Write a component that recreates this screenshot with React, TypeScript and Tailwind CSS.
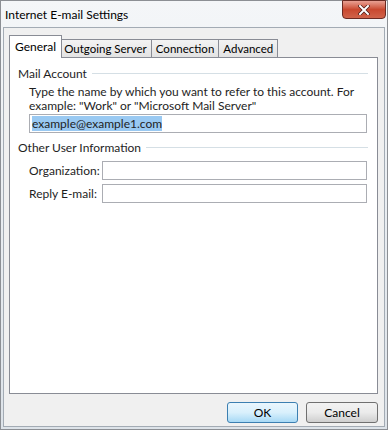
import React from 'react';

const font = { fontFamily: 'Lato, "Noto Sans", Arial, sans-serif' };

function Tab({ label, active }: { label: string; active?: boolean }) {
  if (active) {
    return (
      <div className="relative z-10 -mr-[2px] h-[23px] border border-b-0 border-[#898c95] bg-white px-[5px] pt-[3px] text-[12px] leading-[15px] text-black">
        {label}
      </div>
    );
  }
  return (
    <div className="-ml-[1px] mt-[3px] h-[19px] border border-b-0 border-[#898c95] bg-gradient-to-b from-[#f3f3f3] to-[#e2e2e2] px-[4px] text-[11.5px] leading-[18px] text-black">
      {label}
    </div>
  );
}

function GroupTitle({ label }: { label: string }) {
  return (
    <div className="flex items-center gap-[5px] pr-[9px] text-[12px] leading-[15px] text-[#1e1e1e]">
      <span>{label}</span>
      <div className="h-0 flex-1 border-t border-[#d5dfe5]" />
    </div>
  );
}

export default function App() {
  return (
    <div
      style={font}
      className="flex h-[430px] w-[388px] flex-col border border-[#8c8f94] bg-gradient-to-b from-[#f4f6f8] via-[#e9edf1] to-[#dde3e9]"
    >
      {/* Title bar */}
      <div className="relative h-[26px] shrink-0">
        <div className="pl-[4px] pt-[5px] text-[12px] text-black">Internet E-mail Settings</div>
        <div className="absolute right-[1px] top-[-1px] flex h-[19px] w-[44px] items-center justify-center rounded-b-[4px] border border-[#6b2a22] bg-gradient-to-b from-[#e8a093] via-[#c9482f] to-[#d0634a]">
          <svg width="12" height="10" viewBox="0 0 12 10">
            <path d="M2 1 L10 9 M10 1 L2 9" stroke="#4a1a14" strokeWidth="3.4" strokeLinecap="square" />
            <path d="M2 1 L10 9 M10 1 L2 9" stroke="#ffffff" strokeWidth="2" strokeLinecap="square" />
          </svg>
        </div>
      </div>

      {/* Client area */}
      <div className="mx-[2px] mb-[2px] flex flex-1 flex-col border border-[#a3abb4] bg-[#f0f0f0] px-[5px] pt-[7px]">
        <div className="flex items-end">
          <Tab label="General" active />
          <Tab label="Outgoing Server" />
          <Tab label="Connection" />
          <Tab label="Advanced" />
        </div>
        <div className="-mt-[1px] mr-[1px] h-[337px] border border-[#898c95] bg-white pl-[8px] pt-[8px]">
          <GroupTitle label="Mail Account" />
          <div className="pl-[11px] pr-[10px]">
            <p className="mt-[4px] text-[12px] leading-[14px] text-[#1e1e1e]">
              Type the name by which you want to refer to this account. For example: "Work" or "Microsoft Mail Server"
            </p>
            <div className="mt-[1px] flex h-[19px] items-center border border-[#abadb3] pl-[2px]">
              <span className="bg-[#99c9f2] text-[12px] leading-[15px] text-[#1e1e1e]">example@example1.com</span>
            </div>
          </div>

          <div className="mt-[7px]">
            <GroupTitle label="Other User Information" />
          </div>
          <div className="mt-[6px] flex flex-col gap-[4px] pl-[11px] pr-[10px]">
            <div className="flex items-center">
              <span className="w-[73px] text-[12px] text-[#1e1e1e]">Organization:</span>
              <div className="h-[19px] flex-1 border border-[#abadb3] bg-white" />
            </div>
            <div className="flex items-center">
              <span className="w-[73px] text-[12px] text-[#1e1e1e]">Reply E-mail:</span>
              <div className="h-[19px] flex-1 border border-[#abadb3] bg-white" />
            </div>
          </div>
        </div>

        <div className="mt-[8px] flex justify-end gap-[8px] pr-[1px]">
          <button className="h-[21px] w-[71px] rounded-[3px] border border-[#3c7fb1] bg-gradient-to-b from-[#eaf6fd] via-[#d9f0fc] to-[#a7d9f5] text-[12px] text-black">
            OK
          </button>
          <button className="h-[21px] w-[72px] rounded-[3px] border border-[#707070] bg-gradient-to-b from-[#f2f2f2] via-[#ebebeb] to-[#cfcfcf] text-[12px] text-black">
            Cancel
          </button>
        </div>
      </div>
    </div>
  );
}
